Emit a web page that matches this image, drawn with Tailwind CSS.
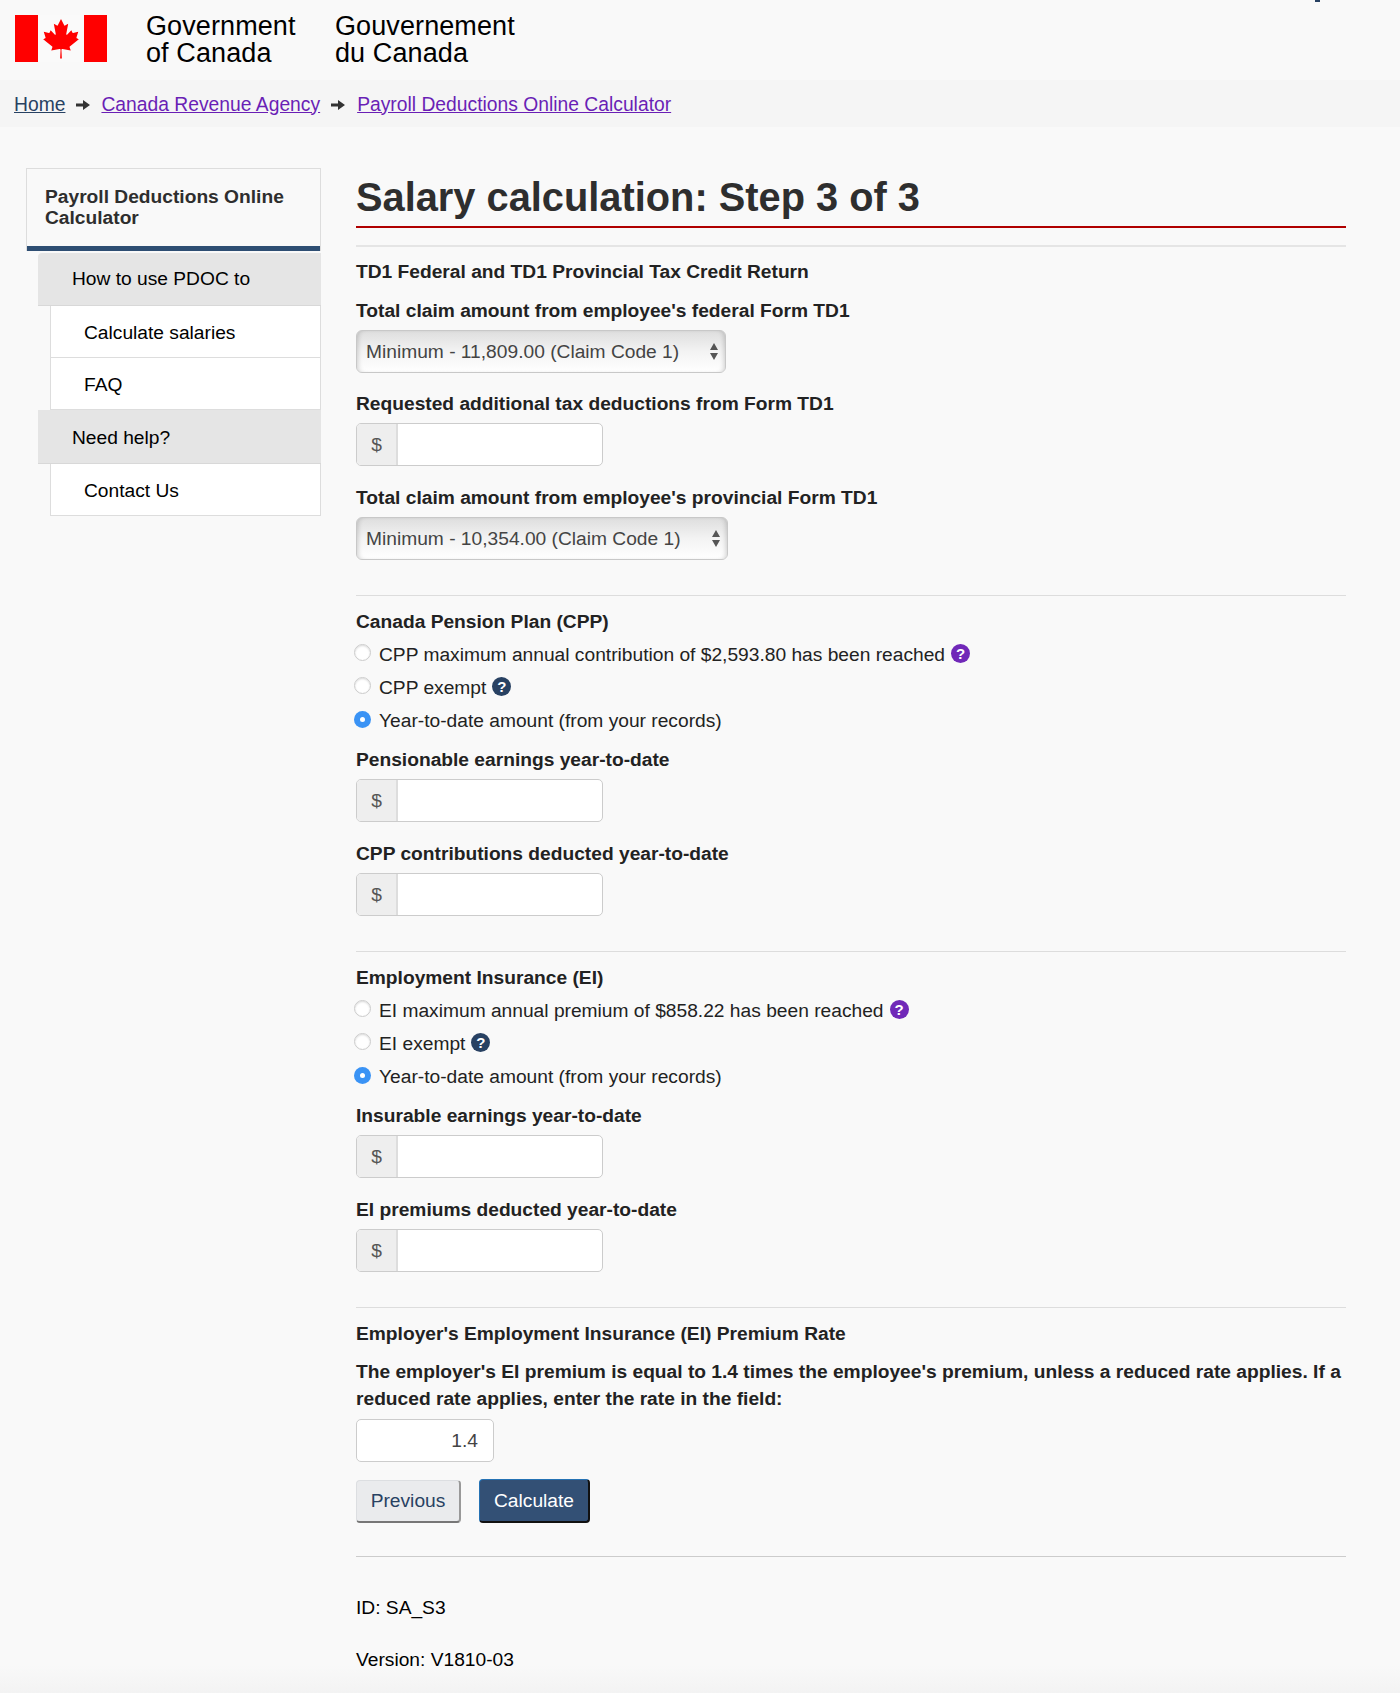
<!DOCTYPE html>
<html lang="en">
<head>
    <meta charset="UTF-8">
    <title>Payroll Deductions Online Calculator</title>
    <script src="https://cdn.jsdelivr.net/npm/@tailwindcss/browser@4"></script>
</head>
<body class="relative min-h-[1693px] bg-[linear-gradient(to_bottom,#f9f9f9_1665px,#f3f3f3_1693px)] font-['Liberation_Sans',Arial,sans-serif] text-[19.2px] text-[#222]">
    <div class="absolute right-[80px] top-0 h-[2px] w-[5px] bg-[#284162]"></div>

    <!-- header -->
    <header class="flex h-[80px] items-start pl-[15px] pt-[15px]">
        <svg class="h-[47px] w-[92px]" viewBox="0 0 9600 4800" preserveAspectRatio="none">
            <rect width="9600" height="4800" fill="#f00"/>
            <path fill="#fafafa" fill-rule="evenodd" d="m2400 0h4800v4800h-4800zm2490 4430-45-863a95 95 0 0 1 111-98l859 151-116-320a65 65 0 0 1 20-73l941-762-212-99a65 65 0 0 1-34-79l186-572-542 115a65 65 0 0 1-73-38l-105-247-423 454a65 65 0 0 1-111-57l204-1052-327 189a65 65 0 0 1-91-27l-332-652-332 652a65 65 0 0 1-91 27l-327-189 204 1052a65 65 0 0 1-111 57l-423-454-105 247a65 65 0 0 1-73 38l-542-115 186 572a65 65 0 0 1-34 79l-212 99 941 762a65 65 0 0 1 20 73l-116 320 859-151a95 95 0 0 1 111 98l-45 863z"/>
        </svg>
        <div class="-mt-[2px] ml-[39px] w-[189px] text-[27px] leading-[27px] tracking-[0.1px] text-black">Government<br>of Canada</div>
        <div class="-mt-[2px] text-[27px] leading-[27px] tracking-[0.1px] text-black">Gouvernement<br>du Canada</div>
    </header>

    <!-- breadcrumb -->
    <nav class="flex h-[47px] items-center bg-[#f5f5f5] pl-[14px] pt-[3px] text-[19.300px]">
        <a href="#" class="text-[#284162] underline">Home</a>
        <svg class="ml-[11px] mr-[11px] h-[12px] w-[14px]" viewBox="0 0 14 12"><path fill="#333" d="M0 4.500h7V1l7 5-7 5V7.500H0z"/></svg>
        <a href="#" class="text-[#6a1fb5] underline">Canada Revenue Agency</a>
        <svg class="ml-[11px] mr-[12px] h-[12px] w-[14px]" viewBox="0 0 14 12"><path fill="#333" d="M0 4.500h7V1l7 5-7 5V7.500H0z"/></svg>
        <a href="#" class="text-[#6a1fb5] underline">Payroll Deductions Online Calculator</a>
    </nav>

    <div class="flex gap-[35px] pl-[26px] pr-[54px] pt-[41px]">
        <!-- sidebar -->
        <aside class="w-[295px] shrink-0 text-black">
            <div class="h-[83px] border border-b-0 border-[#ddd] px-[18px] pt-[17px] leading-[21px] font-bold text-[#2e2e2e] shadow-[inset_0_-5px_0_#2e4e73]">Payroll Deductions Online Calculator</div>
            <div class="ml-[12px] mt-[2px]">
                <div class="flex h-[53px] items-center rounded-tl-[4px] border-b border-[#d8d8d8] bg-[#e5e5e5] pl-[34px] pt-[1px]">How to use PDOC to</div>
                <a href="#" class="ml-[12px] flex h-[52px] items-center border-x border-b border-[#ddd] bg-white pl-[33px] pt-[3px]">Calculate salaries</a>
                <a href="#" class="ml-[12px] flex h-[52px] items-center border-x border-b border-[#ddd] bg-white pl-[33px] pt-[3px]">FAQ</a>
                <div class="flex h-[54px] items-center border-b border-[#d8d8d8] bg-[#e5e5e5] pl-[34px] pt-[3px]">Need help?</div>
                <a href="#" class="ml-[12px] flex h-[52px] items-center border-x border-b border-[#ddd] bg-white pl-[33px] pt-[3px]">Contact Us</a>
            </div>
        </aside>

        <!-- main -->
        <main class="min-w-0 flex-1 leading-[26px]">
            <h1 class="h-[60px] border-b-2 border-[#b00000] text-[39.800px] leading-[58px] font-bold text-[#2e2e2e]">Salary calculation: Step 3 of 3</h1>
            <hr class="mt-[17px] border-t-2 border-[#e5e5e5]">

            <section>
                <h2 class="mt-[12px] font-bold">TD1 Federal and TD1 Provincial Tax Credit Return</h2>
                <label class="mt-[13px] block font-bold">Total claim amount from employee's federal Form TD1</label>
                <div class="relative mt-[6px] w-[370px]">
                    <select class="h-[43px] w-full appearance-none rounded-[6px] border border-[#c8c8c8] bg-[linear-gradient(to_bottom,#dedede,#f3f3f3_50%,#fff)] pl-[9px] text-[#444] shadow-[inset_4px_0_5px_-3px_rgba(0,0,0,0.18),inset_-4px_0_5px_-3px_rgba(0,0,0,0.18)]"><option>Minimum - 11,809.00 (Claim Code 1)</option></select>
                    <svg class="absolute right-[7px] top-[13px] h-[17px] w-[10px]" viewBox="0 0 10 17"><path fill="#555" d="M5 0l4 7H1zM5 17l-4-7h8z"/></svg>
                </div>
                <label class="mt-[18px] block font-bold">Requested additional tax deductions from Form TD1</label>
                <div class="mt-[6px] flex h-[43px] w-[247px] overflow-hidden rounded-[5px] border border-[#ccc] bg-white">
                    <span class="flex w-[41px] items-center justify-center border-r-2 border-[#ddd] bg-[#eee] text-[#555]">$</span>
                    <input class="min-w-0 flex-1 outline-none">
                </div>
                <label class="mt-[19px] block font-bold">Total claim amount from employee's provincial Form TD1</label>
                <div class="relative mt-[6px] w-[372px]">
                    <select class="h-[43px] w-full appearance-none rounded-[6px] border border-[#c8c8c8] bg-[linear-gradient(to_bottom,#dedede,#f3f3f3_50%,#fff)] pl-[9px] text-[#444] shadow-[inset_4px_0_5px_-3px_rgba(0,0,0,0.18),inset_-4px_0_5px_-3px_rgba(0,0,0,0.18)]"><option>Minimum - 10,354.00 (Claim Code 1)</option></select>
                    <svg class="absolute right-[7px] top-[13px] h-[17px] w-[10px]" viewBox="0 0 10 17"><path fill="#555" d="M5 0l4 7H1zM5 17l-4-7h8z"/></svg>
                </div>
            </section>
            <hr class="mt-[35px] border-[#ddd]">

            <section>
                <h2 class="mt-[13px] font-bold">Canada Pension Plan (CPP)</h2>
                <div class="mt-[3px] flex h-[33px] items-center">
                    <span class="-ml-[2px] h-[17px] w-[17px] -translate-y-[2px] rounded-full border border-[#ccc] bg-white shadow-[inset_0_1px_2px_rgba(0,0,0,0.15)]"></span>
                    <span class="ml-[8px]">CPP maximum annual contribution of $2,593.80 has been reached</span>
                    <span class="ml-[6px] flex h-[19px] w-[19px] -translate-y-[1px] items-center justify-center rounded-full bg-[#7028b8] text-[15px] font-bold text-white">?</span>
                </div>
                <div class="flex h-[33px] items-center">
                    <span class="-ml-[2px] h-[17px] w-[17px] -translate-y-[2px] rounded-full border border-[#ccc] bg-white shadow-[inset_0_1px_2px_rgba(0,0,0,0.15)]"></span>
                    <span class="ml-[8px]">CPP exempt</span>
                    <span class="ml-[6px] flex h-[19px] w-[19px] -translate-y-[1px] items-center justify-center rounded-full bg-[#284162] text-[15px] font-bold text-white">?</span>
                </div>
                <div class="flex h-[34px] items-center">
                    <span class="-ml-[2px] flex h-[17px] w-[17px] -translate-y-[2px] items-center justify-center rounded-full bg-[#3a93f5]"><span class="h-[5px] w-[5px] rounded-full bg-white"></span></span>
                    <span class="ml-[8px]">Year-to-date amount (from your records)</span>
                </div>
                <label class="mt-[9px] block font-bold">Pensionable earnings year-to-date</label>
                <div class="mt-[6px] flex h-[43px] w-[247px] overflow-hidden rounded-[5px] border border-[#ccc] bg-white">
                    <span class="flex w-[41px] items-center justify-center border-r-2 border-[#ddd] bg-[#eee] text-[#555]">$</span>
                    <input class="min-w-0 flex-1 outline-none">
                </div>
                <label class="mt-[19px] block font-bold">CPP contributions deducted year-to-date</label>
                <div class="mt-[6px] flex h-[43px] w-[247px] overflow-hidden rounded-[5px] border border-[#ccc] bg-white">
                    <span class="flex w-[41px] items-center justify-center border-r-2 border-[#ddd] bg-[#eee] text-[#555]">$</span>
                    <input class="min-w-0 flex-1 outline-none">
                </div>
            </section>
            <hr class="mt-[35px] border-[#ddd]">

            <section>
                <h2 class="mt-[13px] font-bold">Employment Insurance (EI)</h2>
                <div class="mt-[3px] flex h-[33px] items-center">
                    <span class="-ml-[2px] h-[17px] w-[17px] -translate-y-[2px] rounded-full border border-[#ccc] bg-white shadow-[inset_0_1px_2px_rgba(0,0,0,0.15)]"></span>
                    <span class="ml-[8px]">EI maximum annual premium of $858.22 has been reached</span>
                    <span class="ml-[6px] flex h-[19px] w-[19px] -translate-y-[1px] items-center justify-center rounded-full bg-[#7028b8] text-[15px] font-bold text-white">?</span>
                </div>
                <div class="flex h-[33px] items-center">
                    <span class="-ml-[2px] h-[17px] w-[17px] -translate-y-[2px] rounded-full border border-[#ccc] bg-white shadow-[inset_0_1px_2px_rgba(0,0,0,0.15)]"></span>
                    <span class="ml-[8px]">EI exempt</span>
                    <span class="ml-[6px] flex h-[19px] w-[19px] -translate-y-[1px] items-center justify-center rounded-full bg-[#284162] text-[15px] font-bold text-white">?</span>
                </div>
                <div class="flex h-[34px] items-center">
                    <span class="-ml-[2px] flex h-[17px] w-[17px] -translate-y-[2px] items-center justify-center rounded-full bg-[#3a93f5]"><span class="h-[5px] w-[5px] rounded-full bg-white"></span></span>
                    <span class="ml-[8px]">Year-to-date amount (from your records)</span>
                </div>
                <label class="mt-[9px] block font-bold">Insurable earnings year-to-date</label>
                <div class="mt-[6px] flex h-[43px] w-[247px] overflow-hidden rounded-[5px] border border-[#ccc] bg-white">
                    <span class="flex w-[41px] items-center justify-center border-r-2 border-[#ddd] bg-[#eee] text-[#555]">$</span>
                    <input class="min-w-0 flex-1 outline-none">
                </div>
                <label class="mt-[19px] block font-bold">EI premiums deducted year-to-date</label>
                <div class="mt-[6px] flex h-[43px] w-[247px] overflow-hidden rounded-[5px] border border-[#ccc] bg-white">
                    <span class="flex w-[41px] items-center justify-center border-r-2 border-[#ddd] bg-[#eee] text-[#555]">$</span>
                    <input class="min-w-0 flex-1 outline-none">
                </div>
            </section>
            <hr class="mt-[35px] border-[#ddd]">

            <section>
                <h2 class="mt-[13px] font-bold">Employer's Employment Insurance (EI) Premium Rate</h2>
                <p class="mt-[11px] leading-[27px] font-bold">The employer's EI premium is equal to 1.4 times the employee's premium, unless a reduced rate applies. If a reduced rate applies, enter the rate in the field:</p>
                <input value="1.4" class="mt-[7px] block h-[43px] w-[138px] rounded-[5px] border border-[#ccc] bg-white pr-[15px] text-right text-[#444] outline-none">
                <div class="mt-[17px] flex gap-[18px]">
                    <button class="mt-[1px] h-[43px] w-[105px] rounded-[4px] border border-b-2 border-r-2 border-[#dcdee1] border-b-[#777] border-r-[#999] bg-[#eaebed] text-[#284162]">Previous</button>
                    <button class="h-[44px] w-[111px] rounded-[4px] border border-b-2 border-r-2 border-[#2572b4] border-b-[#111] border-r-[#111] bg-[#335075] text-white">Calculate</button>
                </div>
            </section>
            <hr class="mt-[33px] border-[#ccc]">

            <p class="mt-[38px] text-black">ID: SA_S3</p>
            <p class="mt-[26px] text-black">Version: V1810-03</p>
        </main>
    </div>
</body>
</html>
